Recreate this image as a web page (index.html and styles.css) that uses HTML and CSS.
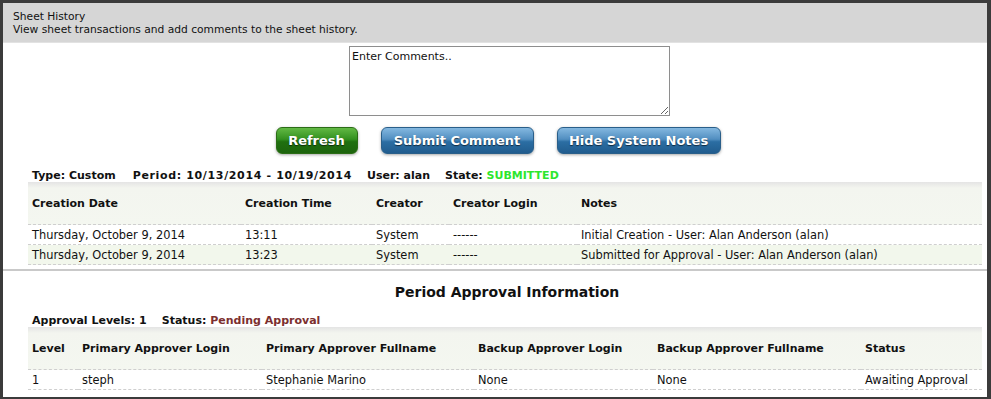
FILE: index.html
```html
<!DOCTYPE html>
<html lang="en">
<head>
    <meta charset="UTF-8">
    <meta name="viewport" content="width=device-width, initial-scale=1.0">
    <link rel="stylesheet" href="styles.css">
</head>
<body>
    <div class="frame">
        <div class="pageHeader">
            <div class="pageTitle">Sheet History</div>
            <div class="pageDesc">View sheet transactions and add comments to the sheet history.</div>
        </div>

        <div class="commentBox">
            <textarea class="comments" id="comments">Enter Comments..</textarea>
        </div>

        <div class="buttonRow">
            <button class="btn btnGreen" id="refreshBtn">Refresh</button>
            <button class="btn btnBlue" id="submitBtn">Submit Comment</button>
            <button class="btn btnBlue" id="hideBtn">Hide System Notes</button>
        </div>

        <div class="section">
            <div class="infoLine">
                <span>Type: Custom</span>
                <span class="infoPeriod">Period: 10/13/2014 - 10/19/2014</span>
                <span>User: alan</span>
                <span>State: <span class="stateSubmitted">SUBMITTED</span></span>
            </div>
            <table class="dataTable historyTable">
                <thead>
                    <tr>
                        <th class="hColDate">Creation Date</th>
                        <th class="hColTime">Creation Time</th>
                        <th class="hColCreator">Creator</th>
                        <th class="hColLogin">Creator Login</th>
                        <th>Notes</th>
                    </tr>
                </thead>
                <tbody>
                    <tr>
                        <td>Thursday, October 9, 2014</td>
                        <td>13:11</td>
                        <td>System</td>
                        <td>------</td>
                        <td>Initial Creation - User: Alan Anderson (alan)</td>
                    </tr>
                    <tr class="alt">
                        <td>Thursday, October 9, 2014</td>
                        <td>13:23</td>
                        <td>System</td>
                        <td>------</td>
                        <td>Submitted for Approval - User: Alan Anderson (alan)</td>
                    </tr>
                </tbody>
            </table>
        </div>

        <div class="divider"></div>

        <div class="section">
            <h2 class="sectionTitle">Period Approval Information</h2>
            <div class="infoLine">
                <span>Approval Levels: 1</span>
                <span>Status: <span class="statusPending">Pending Approval</span></span>
            </div>
            <table class="dataTable approvalTable">
                <thead>
                    <tr>
                        <th class="aColLevel">Level</th>
                        <th class="aColPLogin">Primary Approver Login</th>
                        <th class="aColPName">Primary Approver Fullname</th>
                        <th class="aColBLogin">Backup Approver Login</th>
                        <th class="aColBName">Backup Approver Fullname</th>
                        <th>Status</th>
                    </tr>
                </thead>
                <tbody>
                    <tr>
                        <td>1</td>
                        <td>steph</td>
                        <td>Stephanie Marino</td>
                        <td>None</td>
                        <td>None</td>
                        <td>Awaiting Approval</td>
                    </tr>
                </tbody>
            </table>
        </div>
    </div>
</body>
</html>
```

FILE: styles.css
```css
body {
    margin: 0px;
    background-color: #3b3b3b;
    font-family: "DejaVu Sans", Verdana, sans-serif;
    font-size: 11px;
    color: #111;
}
.frame {
    margin: 3px 4px 0px 3px;
    height: 394px;
    overflow: hidden;
    background-color: #fff;
}
.pageHeader {
    height: 40px;
    box-sizing: border-box;
    padding: 7px 10px 0px 10px;
    background-color: #d6d6d6;
    border-bottom: 1px solid #e2e2e2;
    font-size: 10.7px;
    line-height: 13px;
}
.commentBox {
    display: flex;
    justify-content: center;
    padding-left: 29px; /* line up with table centre */
    margin-top: 3px;
}
.comments {
    width: 321px;
    height: 70px;
    box-sizing: border-box;
    margin: 0px;
    padding: 3px 2px;
    border: 1px solid #8e8e8e;
    font-family: "DejaVu Sans", Verdana, sans-serif;
    font-size: 11px;
    color: #111;
    resize: vertical;
}
.buttonRow {
    display: flex;
    justify-content: center;
    gap: 23px;
    padding-left: 6px;
    margin-top: 11px;
}
.btn {
    height: 27px;
    padding: 0px;
    border-radius: 6px;
    font-family: "DejaVu Sans", Verdana, sans-serif;
    font-size: 13px;
    font-weight: bold;
    color: #fff;
    text-shadow: 0px 1px 1px rgba(0, 0, 0, 0.6);
    box-shadow: 0px 1px 3px rgba(0, 0, 0, 0.35);
}
.btnGreen {
    width: 82px;
    border: 1px solid #2b6d16;
    background: linear-gradient(to bottom, #62b944 0%, #33901f 45%, #207010 55%, #1d640d 100%);
}
.btnBlue {
    border: 1px solid #2a5f8a;
    background: linear-gradient(to bottom, #84b8e0 0%, #518ec0 45%, #2b6ea3 55%, #215c8e 100%);
}
#submitBtn {
    width: 153px;
}
#hideBtn {
    width: 164px;
}
.section {
    padding: 0px 5px 0px 25px;
}
.infoLine {
    display: flex;
    gap: 15px;
    padding-left: 4px;
    margin-top: 15px;
    font-weight: bold;
    line-height: 13px;
}
.infoPeriod {
    margin-left: 2px;
    letter-spacing: 0.65px; /* digits run wider in the original font */
}
.stateSubmitted {
    color: #2ee62e;
}
.statusPending {
    color: #7c2f2f;
}
.dataTable {
    width: 100%;
    border-collapse: collapse;
    table-layout: fixed;
}
.dataTable thead tr {
    background: linear-gradient(to bottom, #e4e4e4 0px, #f3f5ef 6px, #f4f7f0 100%);
}
.dataTable th {
    height: 42px;
    padding: 0px 4px;
    text-align: left;
    font-weight: bold;
    border-bottom: 1px dashed #cfcfcf;
}
.dataTable td {
    height: 19px;
    padding: 0px 4px;
    white-space: nowrap;
    font-size: 11.4px;
    border-bottom: 1px dashed #cfcfcf;
}
.dataTable tr.alt {
    background-color: #f2f7ec;
}
.hColDate { width: 205px; }
.hColTime { width: 123px; }
.hColCreator { width: 69px; }
.hColLogin { width: 120px; }

.aColLevel { width: 42px; }
.aColPLogin { width: 176px; }
.aColPName { width: 204px; }
.aColBLogin { width: 171px; }
.aColBName { width: 200px; }

.divider {
    height: 2px;
    margin-top: 4px;
    background-color: #c9c9c9;
}
.sectionTitle {
    margin: 13px 0px 0px 0px;
    text-align: center;
    font-size: 14px;
    line-height: 17px;
    padding-left: 4px;
}
.section .sectionTitle + .infoLine {
    margin-top: 13px;
}
```
